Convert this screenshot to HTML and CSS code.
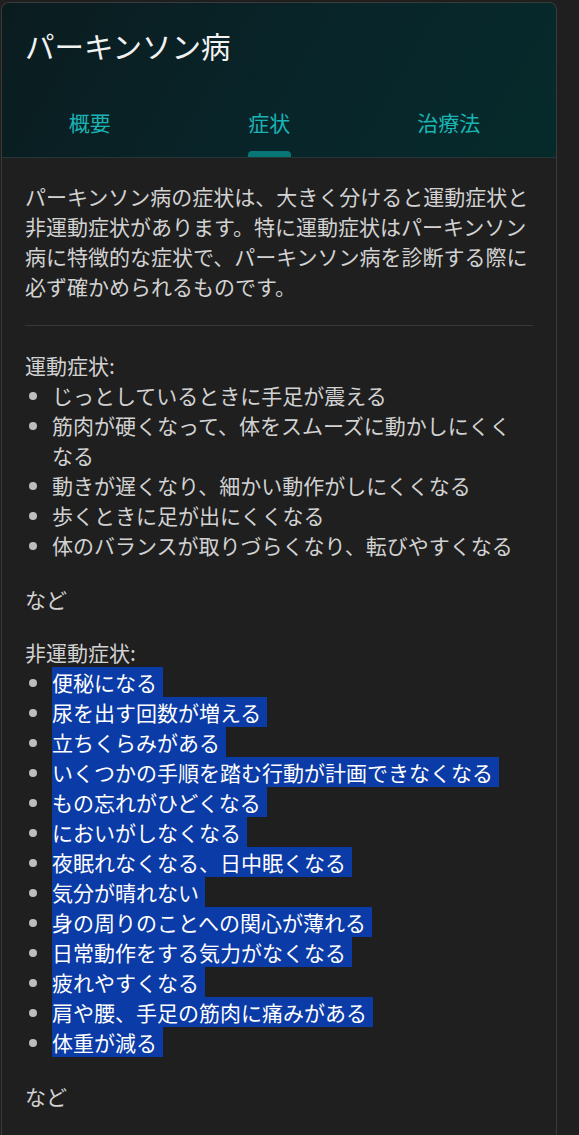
FILE: index.html
```html
<!DOCTYPE html>
<html lang="ja">
<head>
<meta charset="utf-8">
<title>パーキンソン病</title>
<link rel="stylesheet" href="styles.css">
</head>
<body>
<div class="card">
  <header class="card-header">
    <h1 class="title">パーキンソン病</h1>
    <nav class="tabs">
      <div class="tab"><span class="tab-label">概要</span><span class="tab-bar"></span></div>
      <div class="tab tab-active"><span class="tab-label">症状</span><span class="tab-bar"></span></div>
      <div class="tab"><span class="tab-label">治療法</span><span class="tab-bar"></span></div>
    </nav>
  </header>
  <main class="content">
    <p class="lead">パーキンソン病の症状は、大きく分けると運動症状と非運動症状があります。特に運動症状はパーキンソン病に特徴的な症状で、パーキンソン病を診断する際に必ず確かめられるものです。</p>
    <hr class="divider">
    <p class="label">運動症状:</p>
    <ul class="list">
      <li>じっとしているときに手足が震える</li>
      <li>筋肉が硬くなって、体をスムーズに動かしにくくなる</li>
      <li>動きが遅くなり、細かい動作がしにくくなる</li>
      <li>歩くときに足が出にくくなる</li>
      <li>体のバランスが取りづらくなり、転びやすくなる</li>
    </ul>
    <p class="note">など</p>
    <p class="label label-gap">非運動症状:</p>
    <ul class="list">
      <li><span class="sel">便秘になる</span></li>
      <li><span class="sel">尿を出す回数が増える</span></li>
      <li><span class="sel">立ちくらみがある</span></li>
      <li><span class="sel">いくつかの手順を踏む行動が計画できなくなる</span></li>
      <li><span class="sel">もの忘れがひどくなる</span></li>
      <li><span class="sel">においがしなくなる</span></li>
      <li><span class="sel">夜眠れなくなる、日中眠くなる</span></li>
      <li><span class="sel">気分が晴れない</span></li>
      <li><span class="sel">身の周りのことへの関心が薄れる</span></li>
      <li><span class="sel">日常動作をする気力がなくなる</span></li>
      <li><span class="sel">疲れやすくなる</span></li>
      <li><span class="sel">肩や腰、手足の筋肉に痛みがある</span></li>
      <li><span class="sel">体重が減る</span></li>
    </ul>
    <p class="note">など</p>
  </main>
</div>
</body>
</html>
```

FILE: styles.css
```css
* {
  box-sizing: border-box;
}

html, body {
  margin: 0;
  padding: 0;
  background: #1f1f1f;
}

body {
  font-family: "Noto Sans CJK JP", "Noto Sans", sans-serif;
  color: #d2d2d2;
}

.card {
  margin: 2px 0 0 1px;
  width: 556px;
  min-height: 1133px;
  border: 1px solid #3a3a3a;
  border-bottom: none;
  border-radius: 8px 8px 0 0;
  background: #1f1f1f;
  overflow: hidden;
}

.card-header {
  background: linear-gradient(120deg, #0b1c1f 0%, #08252a 55%, #062a2a 100%);
  border-bottom: 1px solid #243636;
  padding-top: 22px;
}

.title {
  margin: 0;
  padding: 0 23px;
  font-size: 29.5px;
  font-weight: 400;
  line-height: 40px;
  color: #f2f2f2;
}

.tabs {
  display: grid;
  grid-template-columns: repeat(3, 179.5px);
  margin-top: 28px;
  margin-left: -2px;
}

.tab {
  display: flex;
  flex-direction: column;
  align-items: center;
  padding-top: 14px;
}

.tab-label {
  font-size: 21px;
  line-height: 30px;
  color: #19b4b4;
}

.tab-bar {
  width: 43px;
  height: 6px;
  margin-top: 14px;
  border-radius: 4px 4px 0 0;
  background: transparent;
}

.tab-active .tab-bar {
  background: #077676;
}

.content {
  padding: 23px 23px 24px;
  font-size: 21px;
  line-height: 30px;
}

.lead {
  margin: 0;
}

.divider {
  margin: 24px 0;
  border: none;
  border-top: 1px solid #373737;
  height: 0;
}

.label {
  margin: 0;
}

.label-gap {
  margin-top: 23px;
}

.list {
  margin: 0;
  padding-left: 27px;
  padding-right: 5px;
}

.list li {
  line-height: 30px;
}

.list li::marker {
  color: #bdbdbd;
}

.note {
  margin: 24px 0 0;
}

.sel {
  display: inline-block;
  vertical-align: top;
  line-height: 30px;
  padding-right: 6px;
  background: #0b3ba6;
  color: #ffffff;
}
```
